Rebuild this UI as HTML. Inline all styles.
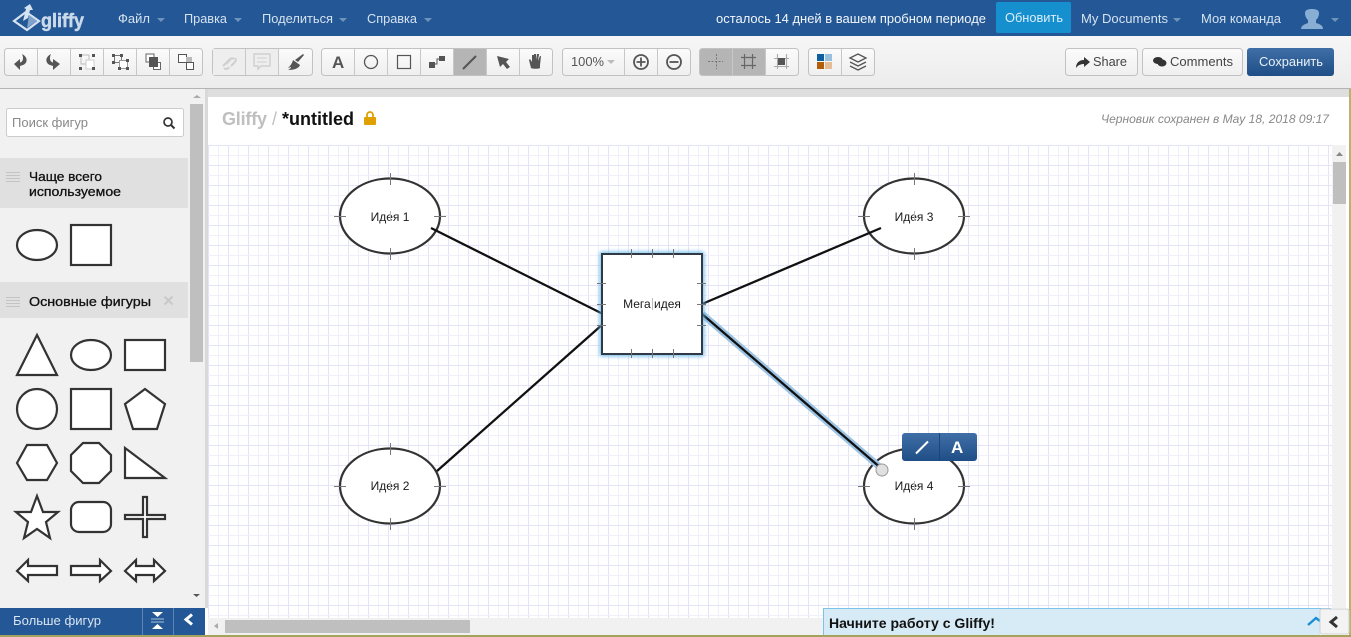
<!DOCTYPE html>
<html><head><meta charset="utf-8"><title>Gliffy</title>
<style>
html,body{margin:0;padding:0;width:1351px;height:637px;overflow:hidden;background:#fff}
svg{display:block;font-family:"Liberation Sans",sans-serif}
</style></head><body>
<svg width="1351" height="637" viewBox="0 0 1351 637" xmlns="http://www.w3.org/2000/svg">
<defs>
<pattern id="grid" x="208" y="145" width="20" height="20" patternUnits="userSpaceOnUse">
<rect width="20" height="20" fill="#fff"/>
<rect x="0" width="1" height="20" fill="#e4e4f8"/><rect x="10" width="1" height="20" fill="#f0f0fb"/>
<rect y="0" width="20" height="1" fill="#e4e4f8"/><rect y="10" width="20" height="1" fill="#f0f0fb"/>
</pattern>
<linearGradient id="tb" x1="0" y1="0" x2="0" y2="1"><stop offset="0" stop-color="#f6f6f6"/><stop offset="1" stop-color="#ececec"/></linearGradient>
<linearGradient id="btn" x1="0" y1="0" x2="0" y2="1"><stop offset="0" stop-color="#fbfbfb"/><stop offset="1" stop-color="#efefef"/></linearGradient>
<linearGradient id="save" x1="0" y1="0" x2="0" y2="1"><stop offset="0" stop-color="#3f6fa6"/><stop offset="1" stop-color="#1f4e86"/></linearGradient>
<filter id="glow" x="-20%" y="-20%" width="140%" height="140%"><feGaussianBlur stdDeviation="2"/></filter>
</defs>

<!-- top nav -->
<rect width="1351" height="36" fill="#245795"/>
<path d="M14 21 L26 12 L39 21 L27 30Z" fill="none" stroke="#d5e2f0" stroke-width="2.200"/>
<path d="M23 21 L26 9 L24 8 L30 4 L33 10 L30 10 L28 18Z" fill="#d5e2f0"/>
<path d="M29 15 L37 21 L27 28Z" fill="#7fa3cb"/>
<text x="41" y="27" font-size="19.500" font-weight="700" fill="#c9d9ea" stroke="#c9d9ea" stroke-width=".5" textLength="43" lengthAdjust="spacingAndGlyphs">gliffy</text>
<g font-size="13" fill="#d5e2f0">
<text x="118" y="23" textLength="32" lengthAdjust="spacingAndGlyphs">Файл</text>
<text x="184" y="23" textLength="43" lengthAdjust="spacingAndGlyphs">Правка</text>
<text x="262" y="23" textLength="71" lengthAdjust="spacingAndGlyphs">Поделиться</text>
<text x="367" y="23" textLength="50" lengthAdjust="spacingAndGlyphs">Справка</text>
<text x="1081" y="23" textLength="87" lengthAdjust="spacingAndGlyphs">My Documents</text>
<text x="1201" y="23" textLength="80" lengthAdjust="spacingAndGlyphs">Моя команда</text>
</g>
<g fill="#6f93bd">
<path d="M157 18h8l-4 4z"/><path d="M234 18h8l-4 4z"/><path d="M339 18h8l-4 4z"/><path d="M424 18h8l-4 4z"/><path d="M1173 18h8l-4 4z"/><path d="M1331 18h8l-4 4z"/>
</g>
<text x="716" y="23" font-size="13" fill="#f2f6fa" textLength="270" lengthAdjust="spacingAndGlyphs">осталось 14 дней в вашем пробном периоде</text>
<rect x="996" y="2" width="75" height="31" rx="2" fill="#168fcf"/>
<text x="1005" y="22" font-size="13" fill="#dceefa" textLength="58" lengthAdjust="spacingAndGlyphs">Обновить</text>
<path d="M1301 29c0-4 5-5 7-6v-3c-2-2-3-4-3-7 0-3 3-4 7-4s7 1 7 4c0 3-1 5-3 7v3c3 1 7 2 7 6z" fill="#89aed3"/>

<!-- toolbar -->
<rect y="36" width="1351" height="52" fill="url(#tb)"/>
<rect y="88" width="1351" height="1" fill="#b4b4b4"/>
<rect x="206" y="89" width="1145" height="8" fill="#dedede"/>

<!-- button groups -->
<g fill="url(#btn)" stroke="#c2c2c2">
<rect x="4.500" y="48.500" width="198" height="27" rx="3"/>
<rect x="212.500" y="48.500" width="100" height="27" rx="3"/>
<rect x="321.500" y="48.500" width="231" height="27" rx="3"/>
<rect x="562.500" y="48.500" width="128" height="27" rx="3"/>
<rect x="699.500" y="48.500" width="99" height="27" rx="3"/>
<rect x="808.500" y="48.500" width="66" height="27" rx="3"/>
<rect x="1065.500" y="48.500" width="72" height="27" rx="3"/>
<rect x="1142.500" y="48.500" width="100" height="27" rx="3"/>
</g>
<rect x="213" y="49" width="66" height="26" fill="#eeeeee"/>
<rect x="453" y="49" width="33" height="26" fill="#b5b5b5"/>
<rect x="700" y="49" width="66" height="26" rx="2" fill="#b5b5b5"/>
<rect x="1247" y="48" width="87" height="28" rx="3" fill="url(#save)"/>
<g stroke="#c8c8c8">
<path d="M37.500 49v26M70.500 49v26M103.500 49v26M136.500 49v26M169.500 49v26"/>
<path d="M245.500 49v26M278.500 49v26"/>
<path d="M354.500 49v26M387.500 49v26M420.500 49v26M453.500 49v26M486.500 49v26M519.500 49v26"/>
<path d="M624.500 49v26M657.500 49v26"/>
<path d="M732.500 49v26M765.500 49v26"/>
<path d="M841.500 49v26"/>
</g>

<!-- icons -->
<g fill="#555">
<path d="M22 54 C28 57 28 63 23 65 L20 66 V70 L14 64 L20 59 V62.500 C23 62 24 58 22 54Z"/>
<path d="M51 54 C45 57 45 63 50 65 L53 66 V70 L60 64 L53 59 V62.500 C50 62 49 58 51 54Z"/>
</g>
<g>
<rect x="81" y="55" width="8" height="9" fill="none" stroke="#bbb"/><rect x="86" y="60" width="8" height="9" fill="#fff" stroke="#ccc"/>
<rect x="79" y="54" width="3" height="3" fill="#555"/><rect x="92" y="54" width="3" height="3" fill="#555"/><rect x="79" y="67" width="3" height="3" fill="#555"/><rect x="92" y="67" width="3" height="3" fill="#555"/>
<rect x="114.500" y="55.500" width="7" height="7" fill="none" stroke="#777"/><rect x="119.500" y="60.500" width="8" height="8" fill="#fff" stroke="#999"/>
<rect x="112" y="54" width="3" height="3" fill="#555"/><rect x="120" y="54" width="3" height="3" fill="#555"/><rect x="112" y="61" width="3" height="3" fill="#555"/><rect x="118" y="67" width="3" height="3" fill="#555"/><rect x="126" y="67" width="3" height="3" fill="#555"/><rect x="126" y="59" width="3" height="3" fill="#555"/>
<rect x="146" y="54" width="8" height="8" fill="#fff" stroke="#666"/><rect x="153.500" y="62.500" width="7" height="7" fill="#fff" stroke="#666"/><rect x="149" y="57" width="9" height="10" fill="#555"/>
<rect x="178.500" y="54.500" width="8" height="8" fill="#fff" stroke="#555"/><rect x="186" y="57" width="6" height="6" fill="#bbb"/><rect x="186.500" y="62.500" width="7" height="7" fill="#fff" stroke="#555"/>
</g>
<path d="M223 66l7-7a3 3 0 0 1 4 0M229 67a3 3 0 0 1-5 1M226 64l5-5M235 58a3 3 0 0 1 0 4l-4 4" fill="none" stroke="#d0d0d0" stroke-width="2"/>
<path d="M254 54h16v12h-9l-3 3v-3h-4z" fill="none" stroke="#d0d0d0" stroke-width="1.500"/><path d="M257 58h10M257 62h10" stroke="#d0d0d0"/>
<path d="M303 54l1 1-6 7-3-2z" fill="#555"/><path d="M293 60l7 5c-1 3-5 5-12 5 2-1 3-2 3-3-1 0-2 1-3 1 2-2 4-4 5-8z" fill="#555"/>
<text x="332" y="68" font-size="17" font-weight="700" fill="#555">A</text>
<circle cx="371" cy="62" r="6.500" fill="none" stroke="#555" stroke-width="1.300"/>
<rect x="397.500" y="55.500" width="13" height="13" fill="none" stroke="#555" stroke-width="1.200"/>
<path d="M429 62h6v6h-6zM439 56h6v5h-6z" fill="#555"/><path d="M435 64h2v-5h3" fill="none" stroke="#555"/>
<path d="M463 69l13-13" stroke="#555" stroke-width="2"/>
<path d="M497 56l12 3-3 3 4 5-3 2-4-5-3 3z" fill="#555"/>
<path d="M531 68l-2-8 1-1 2 3 0-7h2v5l0-6h2v6l1-6h2l-1 7 2-5h1l-1 9 0 3c-1 1-8 1-9 0z" fill="#555"/>
<text x="571" y="66" font-size="13" fill="#555" textLength="33" lengthAdjust="spacingAndGlyphs">100%</text>
<path d="M607 60h8l-4 4z" fill="#bbb"/>
<circle cx="641" cy="62" r="7" fill="none" stroke="#555" stroke-width="1.800"/><path d="M636.500 62h9M641 57.500v9" stroke="#555" stroke-width="1.800"/>
<circle cx="674" cy="62" r="7" fill="none" stroke="#555" stroke-width="1.800"/><path d="M669.500 62h9" stroke="#555" stroke-width="1.800"/>
<path d="M708 61.500h15M716.500 54v15" stroke="#777" stroke-dasharray="2 1.500"/>
<path d="M741 57.500h15M741 65.500h15M744.500 54v15M752.500 54v15" stroke="#666" stroke-width="1.200"/>
<path d="M774 58.500h15M774 66.500h15M777.500 54v15M786.500 54v15" stroke="#aaa" stroke-width="1.100"/><rect x="778" y="58" width="7" height="7" fill="#555"/>
<rect x="817" y="54" width="7" height="7" fill="#0d5f9f"/><rect x="825" y="54" width="7" height="7" fill="#98c0df"/><rect x="817" y="62" width="7" height="7" fill="#b35c0a"/><rect x="825" y="62" width="7" height="7" fill="#e2bd95"/>
<path d="M850 58l8-4 8 4-8 4zM850 62l8 4 8-4M850 66l8 4 8-4" fill="none" stroke="#555" stroke-width="1.300"/>

<path d="M1076 68c0-5 3-8 8-8v-3l6 5-6 5v-3c-3 0-6 1-8 4z" fill="#333"/>
<text x="1093" y="66" font-size="13" fill="#444" textLength="34" lengthAdjust="spacingAndGlyphs">Share</text>
<ellipse cx="1158" cy="60.500" rx="5" ry="3.500" fill="#333"/><ellipse cx="1162" cy="63" rx="4.500" ry="3.500" fill="#333"/>
<text x="1170" y="66" font-size="13" fill="#444" textLength="63" lengthAdjust="spacingAndGlyphs">Comments</text>
<text x="1259" y="66" font-size="13" fill="#e9f0f7" textLength="64" lengthAdjust="spacingAndGlyphs">Сохранить</text>

<!-- sidebar -->
<rect y="89" width="205" height="519" fill="#f1f1f1"/>
<rect x="205" y="89" width="3" height="519" fill="#d9d9d9"/>
<rect x="190" y="104" width="13" height="258" fill="#bfbfbf"/>
<path d="M193 98l4-3 4 3z" fill="#aaa"/><path d="M193 594h7l-3.500 3z" fill="#555"/>
<rect x="6.500" y="108.500" width="177" height="28" rx="2" fill="#fff" stroke="#ccc"/>
<text x="12" y="127" font-size="13" fill="#888" textLength="76" lengthAdjust="spacingAndGlyphs">Поиск фигур</text>
<circle cx="168" cy="122" r="4" fill="none" stroke="#333" stroke-width="1.700"/><path d="M171 125l3.500 3.500" stroke="#333" stroke-width="2"/>

<rect y="158" width="188" height="50" fill="#e0e0e0"/>
<rect y="282" width="188" height="36" fill="#e0e0e0"/>
<path d="M6 172.500h14M6 175.500h14M6 178.500h14M6 181.500h14M6 297.500h14M6 300.500h14M6 303.500h14M6 306.500h14" stroke="#c4c4c4"/>
<g font-size="13" fill="#111" stroke="#111" stroke-width=".3">
<text x="29" y="181" textLength="73" lengthAdjust="spacingAndGlyphs">Чаще всего</text>
<text x="29" y="196" textLength="92" lengthAdjust="spacingAndGlyphs">используемое</text>
<text x="29" y="306" textLength="122" lengthAdjust="spacingAndGlyphs">Основные фигуры</text>
</g>
<path d="M164.500 296.500l8 8M172.500 296.500l-8 8" stroke="#c8c8c8" stroke-width="2"/>

<g fill="#fff" stroke="#333" stroke-width="2.200">
<ellipse cx="37" cy="245" rx="20" ry="15"/>
<rect x="71" y="225" width="40" height="40"/>
<path d="M17 375L37 335L57 375Z"/>
<ellipse cx="91" cy="355" rx="20" ry="15"/>
<rect x="125" y="340" width="40" height="30"/>
<circle cx="37" cy="409" r="20"/>
<rect x="71" y="389" width="40" height="40"/>
<path d="M145 389L165 404L157 429H133L125 404Z"/>
<path d="M17 463L27 445H47L57 463L47 480H27Z"/>
<path d="M83 443H99L111 455V471L99 483H83L71 471V455Z"/>
<path d="M125 448L165 478H125Z"/>
<path d="M37 496L43 512H58L46 522L50 538L37 529L24 538L28 522L16 512H31Z"/>
<rect x="71" y="502" width="40" height="30" rx="8"/>
<path d="M143 497H147V515H165V519H147V537H143V519H125V515H143Z"/>
<path d="M17 571L28 560V566H57V575H28V581Z"/>
<path d="M111 571L100 560V566H71V575H100V581Z"/>
<path d="M125 571L136 560V566H154V560L165 571L154 581V575H136V581Z"/>
</g>

<rect y="608" width="205" height="27" fill="#245795"/>
<path d="M142.500 608v27M173.500 608v27" stroke="#5d86b4"/>
<text x="13" y="625" font-size="13" fill="#d7e4f1" textLength="88" lengthAdjust="spacingAndGlyphs">Больше фигур</text>
<path d="M152 612h11l-5.500 5zM152 629h11l-5.500-5z" fill="#fff"/><path d="M151 619h13M151 622h13" stroke="#a9c0da"/>
<path d="M192 614.500l-6 5 6 5" fill="none" stroke="#fff" stroke-width="3"/>

<!-- canvas -->
<rect x="208" y="97" width="1141" height="48" fill="#fff"/>
<rect x="208" y="145" width="1124" height="473" fill="url(#grid)"/>
<text x="222" y="125" font-size="18" font-weight="700" fill="#bfbfbf" textLength="45">Gliffy</text>
<text x="272" y="125" font-size="18" fill="#bfbfbf">/</text>
<text x="282" y="125" font-size="18" font-weight="700" fill="#111" textLength="72">*untitled</text>
<path d="M367 117v-2a3 3 0 0 1 6 0v2" fill="none" stroke="#e0a000" stroke-width="1.800"/><rect x="364" y="117" width="12" height="8" rx="1" fill="#e0a000"/>
<text x="1101" y="123" font-size="12" font-style="italic" fill="#888" textLength="228" lengthAdjust="spacingAndGlyphs">Черновик сохранен в May 18, 2018 09:17</text>

<!-- right scrollbar -->
<rect x="1332" y="145" width="14" height="463" fill="#f1f1f1"/>
<rect x="1346" y="145" width="3" height="463" fill="#fff"/>
<rect x="1333" y="162" width="13" height="42" fill="#bfbfbf"/>
<path d="M1336 156l3.500-4 3.500 4z" fill="#888"/>
<!-- bottom scrollbar -->
<rect x="208" y="618" width="615" height="17" fill="#f1f1f1"/>
<rect x="225" y="620" width="245" height="13" fill="#bfbfbf"/>
<path d="M218 623v6l-4-3z" fill="#aaa"/>
<rect x="1349" y="89" width="2" height="548" fill="#b5b56c"/>
<rect x="0" y="635" width="1351" height="2" fill="#a3a35e"/>

<!-- ellipses -->
<g fill="#fff" stroke="#333" stroke-width="2.200">
<ellipse cx="390" cy="216" rx="50" ry="37.500"/>
<ellipse cx="914" cy="216" rx="50" ry="37.500"/>
<ellipse cx="390" cy="486" rx="50" ry="37.500"/>
<ellipse cx="914" cy="486" rx="50" ry="37.500"/>
</g>

<!-- connectors -->
<path d="M702 314L882 469" stroke="#9cc3e3" stroke-width="7" fill="none"/>
<g stroke="#111" stroke-width="2.300" fill="none">
<path d="M431 228L603 314"/><path d="M702 304L881 228"/><path d="M437 471L603 324"/><path d="M702 314L882 469"/>
</g>

<rect x="602" y="254" width="100" height="100" fill="none" stroke="#5fb4ea" stroke-width="4" filter="url(#glow)"/>
<rect x="602" y="254" width="100" height="100" fill="#fff" stroke="#2f3a44" stroke-width="2"/>

<g font-size="12" fill="#1a1a1a" text-anchor="middle">
<text x="390" y="221">Идея 1</text>
<text x="914" y="221">Идея 3</text>
<text x="390" y="490">Идея 2</text>
<text x="914" y="490">Идея 4</text>
<text x="652" y="308">Мега идея</text>
</g>

<!-- ports -->
<g stroke="#777" stroke-width="1" fill="none">
<path d="M334 216.500h12M434 216.500h12M390.500 173v12M390.500 248v12"/>
<path d="M858 216.500h12M958 216.500h12M914.500 173v12M914.500 248v12"/>
<path d="M334 486.500h12M434 486.500h12M390.500 443v12M390.500 518v12"/>
<path d="M858 486.500h12M958 486.500h12M914.500 443v12M914.500 518v12"/>
<path d="M631.500 249v9M652.500 249v9M673.500 249v9M631.500 349v9M652.500 349v9M673.500 349v9M597 283.500h9M597 304.500h9M597 325.500h9M697 283.500h9M697 304.500h9M697 325.500h9"/>
</g>
<g stroke="#bbb" stroke-width="1" fill="none">
<path d="M390.500 211v10M914.500 211v10M390.500 481v10M914.500 481v10M652.500 298v12"/>
</g>

<!-- handle + popup -->
<circle cx="882" cy="470" r="6" fill="#e0e0e0" stroke="#999"/>
<rect x="902" y="433" width="75" height="28" rx="3" fill="url(#save)"/>
<path d="M939.500 433v28" stroke="#1d4674"/>
<path d="M916 453.500l12-12" stroke="#fff" stroke-width="2"/>
<text x="951" y="453" font-size="17" font-weight="700" fill="#fff">A</text>

<!-- bottom panel -->
<rect x="823" y="608" width="497" height="27" fill="#d6ebf6"/>
<path d="M823.500 635v-26.500H1331" fill="none" stroke="#7cc3ea"/>
<text x="829" y="628" font-size="14" font-weight="700" fill="#111" textLength="166" lengthAdjust="spacingAndGlyphs">Начните работу с Gliffy!</text>
<path d="M1308 625l8-7 4 3" fill="none" stroke="#1b8fd6" stroke-width="2.400"/>
<rect x="1320" y="609" width="29" height="25" rx="2" fill="#f3f3f3" stroke="#d0d0d0"/>
<path d="M1337 617l-6 5 6 5" fill="none" stroke="#333" stroke-width="3"/>
</svg>
</body></html>
